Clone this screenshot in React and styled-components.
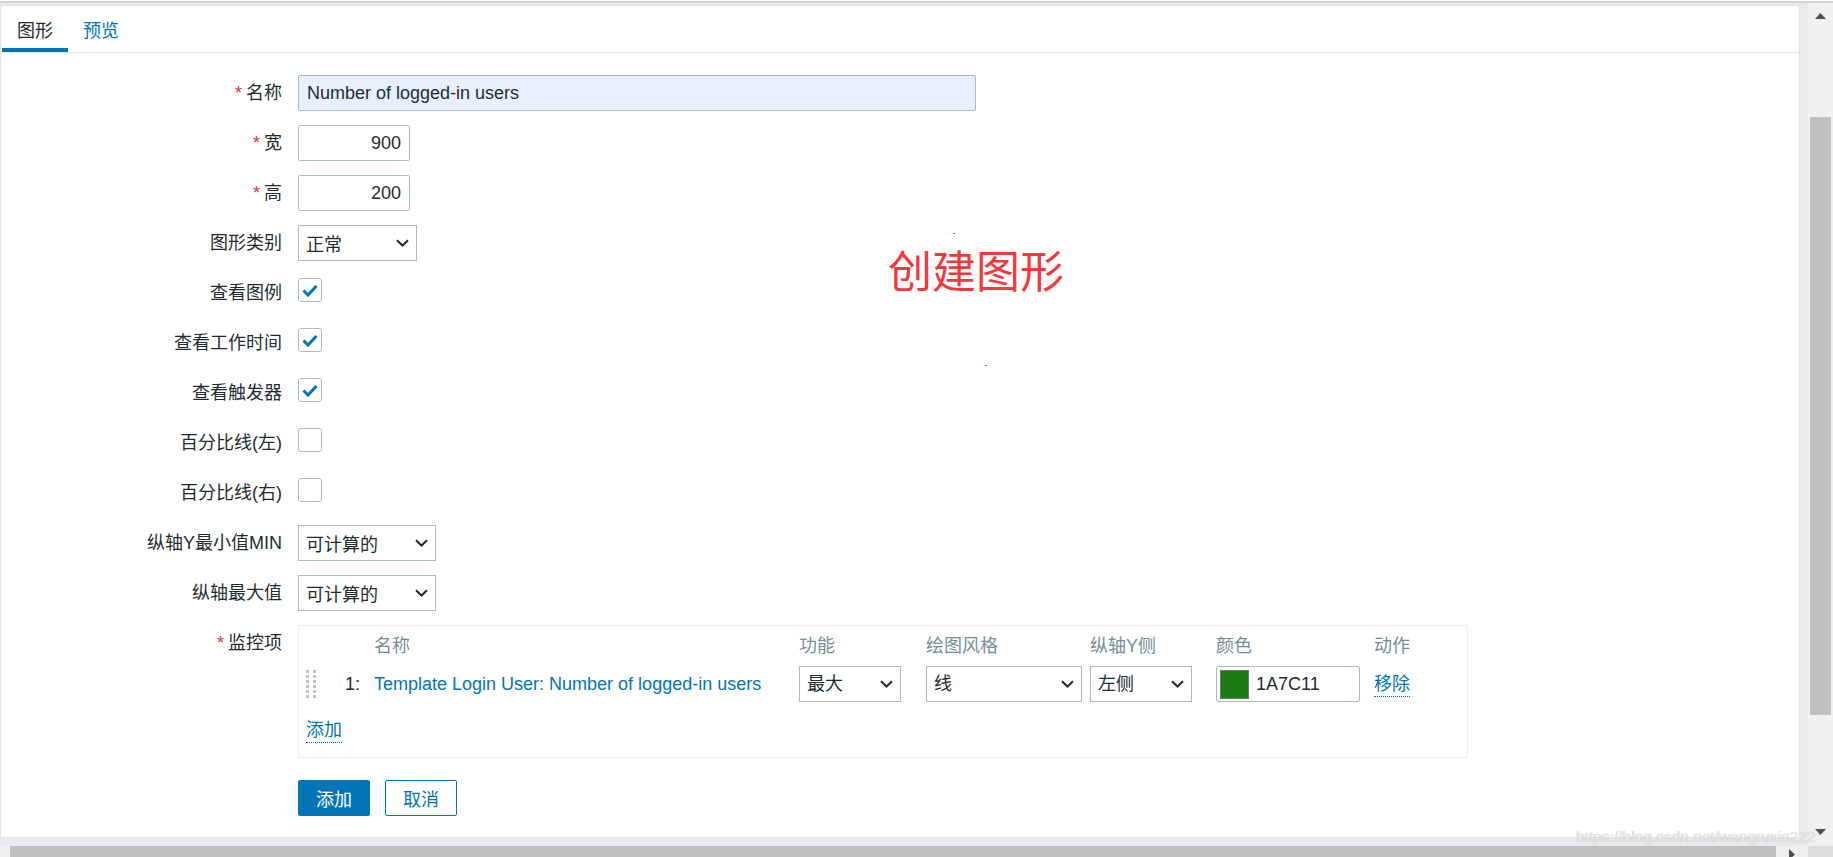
import React from "react";
import styled, { createGlobalStyle } from "styled-components";

const GlobalStyle = createGlobalStyle`
  html, body {
    margin: 0;
    padding: 0;
    background: #fff;
  }
  body {
    font-family: "Liberation Sans", "Noto Sans CJK SC", sans-serif;
  }
  * {
    box-sizing: border-box;
  }
`;

const BLUE = "#0275b8";
const BORDER = "#acbbc2";
const TEXT = "#1f2c33";

const Screen = styled.div`
  position: relative;
  width: 1833px;
  height: 857px;
  overflow: hidden;
  display: grid;
  grid-template-columns: 1808px 25px;
  grid-template-rows: 3px 843px 17px;
  font-size: 18px;
  color: ${TEXT};
  background: #fff;
`;

const TopLine = styled.div`
  grid-column: 1 / -1;
  border-top: 1px solid #fff;
  background: #d3d3d3;
`;

const Viewport = styled.div`
  display: flex;
  min-height: 0;
  background: #e8ebed;
  padding: 2px 8px 8px 0;
`;

const Card = styled.div`
  flex: 1;
  display: flex;
  flex-direction: column;
  background: #fff;
  border: 1px solid #dfe4e7;
`;

const TabBar = styled.div`
  display: flex;
  height: 47px;
  padding-left: 1px;
  border-bottom: 1px solid #dfe4e7;
`;

const Tab = styled.div`
  display: flex;
  align-items: center;
  height: 46px;
  padding: 3px 15px 0;
  border-bottom: 4px solid ${(p) => (p.$active ? BLUE : "transparent")};
  color: ${(p) => (p.$active ? TEXT : BLUE)};
`;

const FormGrid = styled.div`
  display: grid;
  grid-template-columns: 281px 1fr;
  column-gap: 16px;
  row-gap: 14px;
  align-items: start;
  padding-top: 22px;
`;

const Label = styled.div`
  text-align: right;
  line-height: 36px;
  white-space: nowrap;
`;

const Star = styled.span`
  color: #e33734;
  margin-right: 4px;
`;

const Control = styled.div`
  display: flex;
  align-items: ${(p) => (p.$top ? "flex-start" : "center")};
  gap: ${(p) => p.$gap || 0}px;
  min-height: 36px;
  padding-top: ${(p) => (p.$top ? 3 : 0)}px;
  margin-top: ${(p) => p.$mt || 0}px;
`;

const TextInput = styled.input`
  width: ${(p) => p.$w}px;
  height: 36px;
  padding: 0 8px;
  border: 1px solid ${BORDER};
  border-radius: 2px;
  background: ${(p) => (p.$filled ? "#e8f0fe" : "#fff")};
  font: inherit;
  color: ${TEXT};
  text-align: ${(p) => (p.$right ? "right" : "left")};
  outline: none;
`;

const SelectBox = styled.div`
  width: ${(p) => p.$w}px;
  height: 36px;
  display: flex;
  align-items: center;
  justify-content: space-between;
  padding: 0 7px;
  border: 1px solid ${BORDER};
  background: #fff;
  color: ${TEXT};
`;

const Box = styled.div`
  width: 24px;
  height: 24px;
  border: 1px solid ${BORDER};
  border-radius: 3px;
  background: #fff;
  display: flex;
  align-items: center;
  justify-content: center;
`;

const ItemsBox = styled.div`
  width: 1170px;
  border: 1px solid #ebeef0;
  padding: 8px 0 14px 7px;
`;

const ItemGrid = styled.div`
  display: grid;
  grid-template-columns: 39px 29px 425px 127px 164px 126px 158px auto;
  align-items: center;
  margin-top: ${(p) => p.$mt || 0}px;
  line-height: 24px;
`;

const HeadCell = styled.div`
  color: #768d99;
`;

const Link = styled.span`
  color: ${BLUE};
  white-space: nowrap;
`;

const DottedLink = styled.span`
  display: inline-block;
  color: ${BLUE};
  line-height: 24px;
  border-bottom: 1px dotted ${BLUE};
`;

const AddRow = styled.div`
  margin-top: 16px;
`;

const ColorField = styled.div`
  width: 144px;
  height: 36px;
  display: flex;
  align-items: center;
  gap: 7px;
  padding: 0 3px;
  border: 1px solid ${BORDER};
  border-radius: 2px;
`;

const Swatch = styled.div`
  width: 29px;
  height: 29px;
  background: ${(p) => p.$color};
  border: 1px solid #6c7a74;
`;

const Button = styled.button`
  height: 36px;
  padding: 0 17px;
  border: 1px solid ${BLUE};
  border-radius: 2px;
  font: inherit;
  background: ${(p) => (p.$primary ? BLUE : "#fff")};
  color: ${(p) => (p.$primary ? "#fff" : BLUE)};
`;

const VScroll = styled.div`
  display: flex;
  flex-direction: column;
  align-items: center;
  background: #f0f0f0;
`;

const ArrowCell = styled.div`
  flex: none;
  height: ${(p) => p.$h}px;
  width: ${(p) => (p.$w ? `${p.$w}px` : "100%")};
  display: flex;
  align-items: center;
  justify-content: center;
`;

const VThumb = styled.div`
  flex: none;
  width: 21px;
  height: 598px;
  margin-top: 88px;
  background: #c0c0c0;
`;

const Spacer = styled.div`
  flex: 1;
`;

const HScroll = styled.div`
  display: flex;
  background: #f0f0f0;
`;

const HThumb = styled.div`
  flex: none;
  width: 1766px;
  margin-left: 10px;
  background: #c0c0c0;
`;

const Corner = styled.div`
  background: #dcdcdc;
`;

const Annotation = styled.div`
  position: absolute;
  left: 888px;
  top: 247px;
  font-family: "Noto Sans CJK SC", sans-serif;
  font-size: 44px;
  line-height: 1;
  color: #f23a3c;
  white-space: nowrap;
`;

const Speck = styled.div`
  position: absolute;
  width: 2px;
  height: 1px;
  background: #f23a3c;
`;

const Watermark = styled.div`
  position: absolute;
  left: 1576px;
  top: 828px;
  font-size: 15.5px;
  color: rgba(236, 236, 236, 0.92);
  text-shadow: 0 0 1px rgba(120, 120, 120, 0.5);
  white-space: nowrap;
`;

const Chevron = () => (
  <svg width="13" height="8" viewBox="0 0 13 8">
    <path d="M1 1.2 L6.5 6.5 L12 1.2" fill="none" stroke={TEXT} strokeWidth="2" />
  </svg>
);

const Select = ({ w, value }) => (
  <SelectBox $w={w}>
    <span>{value}</span>
    <Chevron />
  </SelectBox>
);

const Checkbox = ({ checked }) => (
  <Box>
    {checked && (
      <svg width="16" height="13" viewBox="0 0 16 13">
        <path d="M1.5 6.5 L6 11 L14.5 2" fill="none" stroke={BLUE} strokeWidth="3" />
      </svg>
    )}
  </Box>
);

const DragHandle = () => (
  <svg width="10" height="28" viewBox="0 0 10 28">
    {[0, 5, 10, 15, 20, 25].map((y) => (
      <g key={y} fill="#b7c3c9">
        <rect x="0" y={y} width="3" height="3" />
        <rect x="7" y={y} width="3" height="3" />
      </g>
    ))}
  </svg>
);

const Triangle = ({ dir }) => {
  const pts = {
    up: "0,6 5.5,0 11,6",
    down: "0,0 5.5,6 11,0",
    right: "0,0 6,5.5 0,11",
  }[dir];
  const w = dir === "right" ? 6 : 11;
  const h = dir === "right" ? 11 : 6;
  return (
    <svg width={w} height={h} viewBox={`0 0 ${w} ${h}`}>
      <polygon points={pts} fill="#505050" />
    </svg>
  );
};

const Field = ({ label, required, top, children }) => (
  <>
    <Label>
      {required && <Star>*</Star>}
      {label}
    </Label>
    <Control $top={top}>{children}</Control>
  </>
);

export default function App() {
  return (
    <>
      <GlobalStyle />
      <Screen>
        <TopLine />
        <Viewport>
          <Card>
            <TabBar>
              <Tab $active>图形</Tab>
              <Tab>预览</Tab>
            </TabBar>
            <FormGrid>
              <Field label="名称" required>
                <TextInput $w={678} $filled readOnly value="Number of logged-in users" />
              </Field>
              <Field label="宽" required>
                <TextInput $w={112} $right readOnly value="900" />
              </Field>
              <Field label="高" required>
                <TextInput $w={112} $right readOnly value="200" />
              </Field>
              <Field label="图形类别">
                <Select w={119} value="正常" />
              </Field>
              <Field label="查看图例" top>
                <Checkbox checked />
              </Field>
              <Field label="查看工作时间" top>
                <Checkbox checked />
              </Field>
              <Field label="查看触发器" top>
                <Checkbox checked />
              </Field>
              <Field label="百分比线(左)" top>
                <Checkbox />
              </Field>
              <Field label="百分比线(右)" top>
                <Checkbox />
              </Field>
              <Field label="纵轴Y最小值MIN">
                <Select w={138} value="可计算的" />
              </Field>
              <Field label="纵轴最大值">
                <Select w={138} value="可计算的" />
              </Field>
              <Label>
                <Star>*</Star>监控项
              </Label>
              <ItemsBox>
                <ItemGrid>
                  <span />
                  <span />
                  <HeadCell>名称</HeadCell>
                  <HeadCell>功能</HeadCell>
                  <HeadCell>绘图风格</HeadCell>
                  <HeadCell>纵轴Y侧</HeadCell>
                  <HeadCell>颜色</HeadCell>
                  <HeadCell>动作</HeadCell>
                </ItemGrid>
                <ItemGrid $mt={8}>
                  <DragHandle />
                  <span>1:</span>
                  <Link>Template Login User: Number of logged-in users</Link>
                  <Select w={102} value="最大" />
                  <Select w={156} value="线" />
                  <Select w={102} value="左侧" />
                  <ColorField>
                    <Swatch $color="#1a7c11" />
                    <span>1A7C11</span>
                  </ColorField>
                  <div>
                    <DottedLink>移除</DottedLink>
                  </div>
                </ItemGrid>
                <AddRow>
                  <DottedLink>添加</DottedLink>
                </AddRow>
              </ItemsBox>
              <span />
              <Control $gap={15} $mt={8}>
                <Button $primary>添加</Button>
                <Button>取消</Button>
              </Control>
            </FormGrid>
          </Card>
        </Viewport>
        <VScroll>
          <ArrowCell $h={26}>
            <Triangle dir="up" />
          </ArrowCell>
          <VThumb />
          <Spacer />
          <ArrowCell $h={28}>
            <Triangle dir="down" />
          </ArrowCell>
        </VScroll>
        <HScroll>
          <HThumb />
          <ArrowCell $h={17} $w={32}>
            <Triangle dir="right" />
          </ArrowCell>
        </HScroll>
        <Corner />
        <Annotation>创建图形</Annotation>
        <Speck style={{ left: 953, top: 233 }} />
        <Speck style={{ left: 985, top: 365 }} />
        <Watermark>https://blog.csdn.net/wangruxin222</Watermark>
      </Screen>
    </>
  );
}
